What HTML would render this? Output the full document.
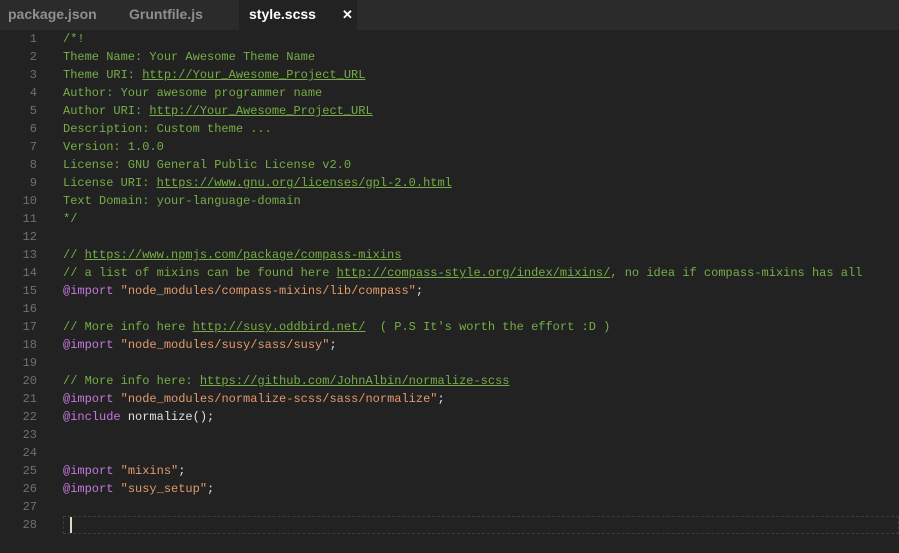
<!DOCTYPE html>
<html><head><style>
body{margin:0;width:899px;height:553px;background:#222;overflow:hidden;font-family:"Liberation Mono",monospace;}
.tabs{height:30px;background:#2b2b2b;position:relative;font-family:"Liberation Sans",sans-serif;font-size:14px;}
.tab{position:absolute;top:0;height:30px;line-height:28px;color:#8f8f8f;font-weight:bold;}
.act{background:#222;color:#fff;}
.code{position:absolute;top:30px;left:0;right:0;font-size:12px;line-height:18px;}
.l{height:18px;position:relative;white-space:pre;}
.n{position:absolute;left:0;width:37px;text-align:right;color:#707070;}
.t{position:absolute;left:63px;color:#76ad48;}
.u{text-decoration:underline;}
.k{color:#c678dd;}
.s{color:#e39a6c;}
.w{color:#e0e0e0;}
.cur{position:absolute;left:63px;right:0;top:0;height:16px;border:1px dashed #3c3c3c;}
.caret{position:absolute;left:70px;top:1px;width:2px;height:16px;background:#d8dcc0;}
</style></head><body>
<div class="tabs">
<div class="tab" style="left:8px">package.json</div>
<div class="tab" style="left:129px">Gruntfile.js</div>
<div class="tab act" style="left:239px;width:118px"><span style="margin-left:10px">style.scss</span><span style="position:absolute;left:103px;top:1px;font-size:13px">✕</span></div>
</div>
<div class="code">
<div class="l"><span class="n">1</span><span class="t">/*!</span></div>
<div class="l"><span class="n">2</span><span class="t">Theme Name: Your Awesome Theme Name</span></div>
<div class="l"><span class="n">3</span><span class="t">Theme URI: <span class="u">http://Your_Awesome_Project_URL</span></span></div>
<div class="l"><span class="n">4</span><span class="t">Author: Your awesome programmer name</span></div>
<div class="l"><span class="n">5</span><span class="t">Author URI: <span class="u">http://Your_Awesome_Project_URL</span></span></div>
<div class="l"><span class="n">6</span><span class="t">Description: Custom theme ...</span></div>
<div class="l"><span class="n">7</span><span class="t">Version: 1.0.0</span></div>
<div class="l"><span class="n">8</span><span class="t">License: GNU General Public License v2.0</span></div>
<div class="l"><span class="n">9</span><span class="t">License URI: <span class="u">https://www.gnu.org/licenses/gpl-2.0.html</span></span></div>
<div class="l"><span class="n">10</span><span class="t">Text Domain: your-language-domain</span></div>
<div class="l"><span class="n">11</span><span class="t">*/</span></div>
<div class="l"><span class="n">12</span></div>
<div class="l"><span class="n">13</span><span class="t">// <span class="u">https://www.npmjs.com/package/compass-mixins</span></span></div>
<div class="l"><span class="n">14</span><span class="t">// a list of mixins can be found here <span class="u">http://compass-style.org/index/mixins/</span>, no idea if compass-mixins has all</span></div>
<div class="l"><span class="n">15</span><span class="t"><span class="k">@import</span> <span class="s">"node_modules/compass-mixins/lib/compass"</span><span class="w">;</span></span></div>
<div class="l"><span class="n">16</span></div>
<div class="l"><span class="n">17</span><span class="t">// More info here <span class="u">http://susy.oddbird.net/</span>  ( P.S It's worth the effort :D )</span></div>
<div class="l"><span class="n">18</span><span class="t"><span class="k">@import</span> <span class="s">"node_modules/susy/sass/susy"</span><span class="w">;</span></span></div>
<div class="l"><span class="n">19</span></div>
<div class="l"><span class="n">20</span><span class="t">// More info here: <span class="u">https://github.com/JohnAlbin/normalize-scss</span></span></div>
<div class="l"><span class="n">21</span><span class="t"><span class="k">@import</span> <span class="s">"node_modules/normalize-scss/sass/normalize"</span><span class="w">;</span></span></div>
<div class="l"><span class="n">22</span><span class="t"><span class="k">@include</span> <span class="w">normalize();</span></span></div>
<div class="l"><span class="n">23</span></div>
<div class="l"><span class="n">24</span></div>
<div class="l"><span class="n">25</span><span class="t"><span class="k">@import</span> <span class="s">"mixins"</span><span class="w">;</span></span></div>
<div class="l"><span class="n">26</span><span class="t"><span class="k">@import</span> <span class="s">"susy_setup"</span><span class="w">;</span></span></div>
<div class="l"><span class="n">27</span></div>
<div class="l"><span class="cur"></span><span class="caret"></span><span class="n">28</span></div>
</div>
</body></html>
